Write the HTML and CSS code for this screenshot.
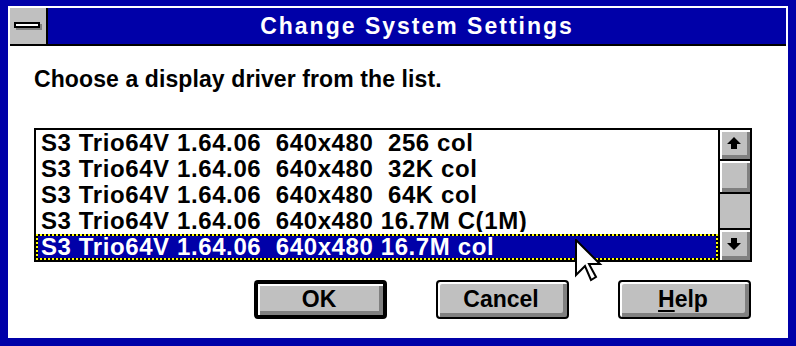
FILE: index.html
```html
<!DOCTYPE html>
<html lang="en">
<head>
  <meta charset="UTF-8">
  <title>Change System Settings</title>
  <link rel="stylesheet" href="styles.css">
</head>
<body>
  <div class="window">
    <div class="titlebar">
      <div class="sysmenu"><span class="sysmenu-bar"></span></div>
      <div class="title">Change System Settings</div>
    </div>
    <div class="content">
      <p class="prompt">Choose a display driver from the list.</p>
      <div class="listbox">
        <ul class="items">
          <li>S3 Trio64V 1.64.06  640x480  256 col</li>
          <li>S3 Trio64V 1.64.06  640x480  32K col</li>
          <li>S3 Trio64V 1.64.06  640x480  64K col</li>
          <li>S3 Trio64V 1.64.06  640x480 16.7M C(1M)</li>
          <li class="selected">S3 Trio64V 1.64.06  640x480 16.7M col</li>
        </ul>
        <div class="scrollbar">
          <div class="sb-btn sb-up">
            <svg width="14" height="12" viewBox="0 0 14 12"><polygon points="7,0 14,7 10,7 10,12 4,12 4,7 0,7" fill="#000"/></svg>
          </div>
          <div class="sb-thumb"></div>
          <div class="sb-track"></div>
          <div class="sb-btn sb-down">
            <svg width="14" height="12" viewBox="0 0 14 12"><polygon points="4,0 10,0 10,5 14,5 7,12 0,5 4,5" fill="#000"/></svg>
          </div>
        </div>
      </div>
      <div class="buttons">
        <button class="btn btn-default">OK</button>
        <button class="btn">Cancel</button>
        <button class="btn"><u>H</u>elp</button>
      </div>
    </div>
  </div>
  <svg class="cursor" width="28" height="44" viewBox="0 0 28 44">
    <polygon points="1,1 1,36 10,27 16,41 21,38 14,25 25,25" fill="#fff" stroke="#000" stroke-width="2" stroke-linejoin="miter"/>
  </svg>
</body>
</html>
```

FILE: styles.css
```css
* {
  margin: 0;
  padding: 0;
  box-sizing: border-box;
  font-family: 'Liberation Sans', Arial, sans-serif;
  font-weight: bold;
}
body {
  background: #0000a8;
  width: 796px;
  height: 346px;
  padding: 6px 8px 8px;
  overflow: hidden;
}
.window {
  background: #fff;
  padding: 2px;
  height: 332px;
}
.titlebar {
  display: flex;
  height: 38px;
  background: #0000a8;
  border-bottom: 2px solid #000;
}
.sysmenu {
  width: 38px;
  background: #c0c0c0;
  border-right: 2px solid #000;
  padding: 14px 0 0 4px;
}
.sysmenu-bar {
  display: block;
  width: 26px;
  height: 6px;
  background: #fff;
  border: 2px solid #000;
  box-shadow: 2px 2px #808080;
}
.title {
  flex: 1;
  text-align: center;
  color: #fff;
  font-size: 23px;
  letter-spacing: 2px;
  line-height: 36px;
}
.content {
  padding: 20px 34px 0 24px;
}
.prompt {
  font-size: 23px;
  letter-spacing: 0.1px;
  line-height: 26px;
  color: #000;
}
.listbox {
  display: flex;
  margin-top: 36px;
  height: 134px;
  border: 2px solid #000;
}
.items {
  flex: 1;
  list-style: none;
}
.items li {
  height: 26px;
  border: 2px solid transparent;
  padding-left: 3px;
  font-size: 24px;
  letter-spacing: 0.6px;
  line-height: 22px;
  white-space: pre;
  overflow: hidden;
  color: #000;
}
/* focus rectangle: yellow/black dots drawn on the border area */
.items li.selected {
  color: #fff;
  background:
    repeating-linear-gradient(90deg, #ff0 0 2px, #000 2px 4px) top / 100% 2px no-repeat,
    repeating-linear-gradient(90deg, #ff0 0 2px, #000 2px 4px) bottom / 100% 2px no-repeat,
    repeating-linear-gradient(#ff0 0 2px, #000 2px 4px) left / 2px 100% no-repeat,
    repeating-linear-gradient(#ff0 0 2px, #000 2px 4px) right / 2px 100% no-repeat,
    #0000a8;
  background-origin: border-box;
}
.scrollbar {
  width: 32px;
  display: flex;
  flex-direction: column;
  border-left: 2px solid #000;
  background: #c0c0c0;
}
.sb-btn,
.sb-thumb {
  box-shadow: inset 2px 2px #fff, inset -3px -4px #808080;
}
.sb-btn {
  display: flex;
  align-items: center;
  justify-content: center;
  padding: 0 2px 3px 0;
}
.sb-up {
  height: 31px;
  border-bottom: 2px solid #000;
}
.sb-thumb {
  height: 33px;
  border-bottom: 2px solid #000;
}
.sb-track {
  flex: 1;
}
.sb-down {
  height: 32px;
  border-top: 2px solid #000;
}
.buttons {
  display: flex;
  justify-content: flex-end;
  gap: 49px;
  margin-top: 18px;
  padding-right: 1px;
}
.btn {
  width: 133px;
  height: 39px;
  border: 2px solid #000;
  border-radius: 4px;
  background: #c0c0c0;
  box-shadow: inset 2px 2px #fff, inset -4px -4px #808080;
  font-size: 23px;
  color: #000;
  padding: 0 3px 1px 0;
}
.btn u {
  text-decoration-thickness: 2px;
  text-underline-offset: 3px;
}
.btn-default {
  border-width: 4px;
}
.cursor {
  position: absolute;
  left: 575px;
  top: 239px;
}
```
